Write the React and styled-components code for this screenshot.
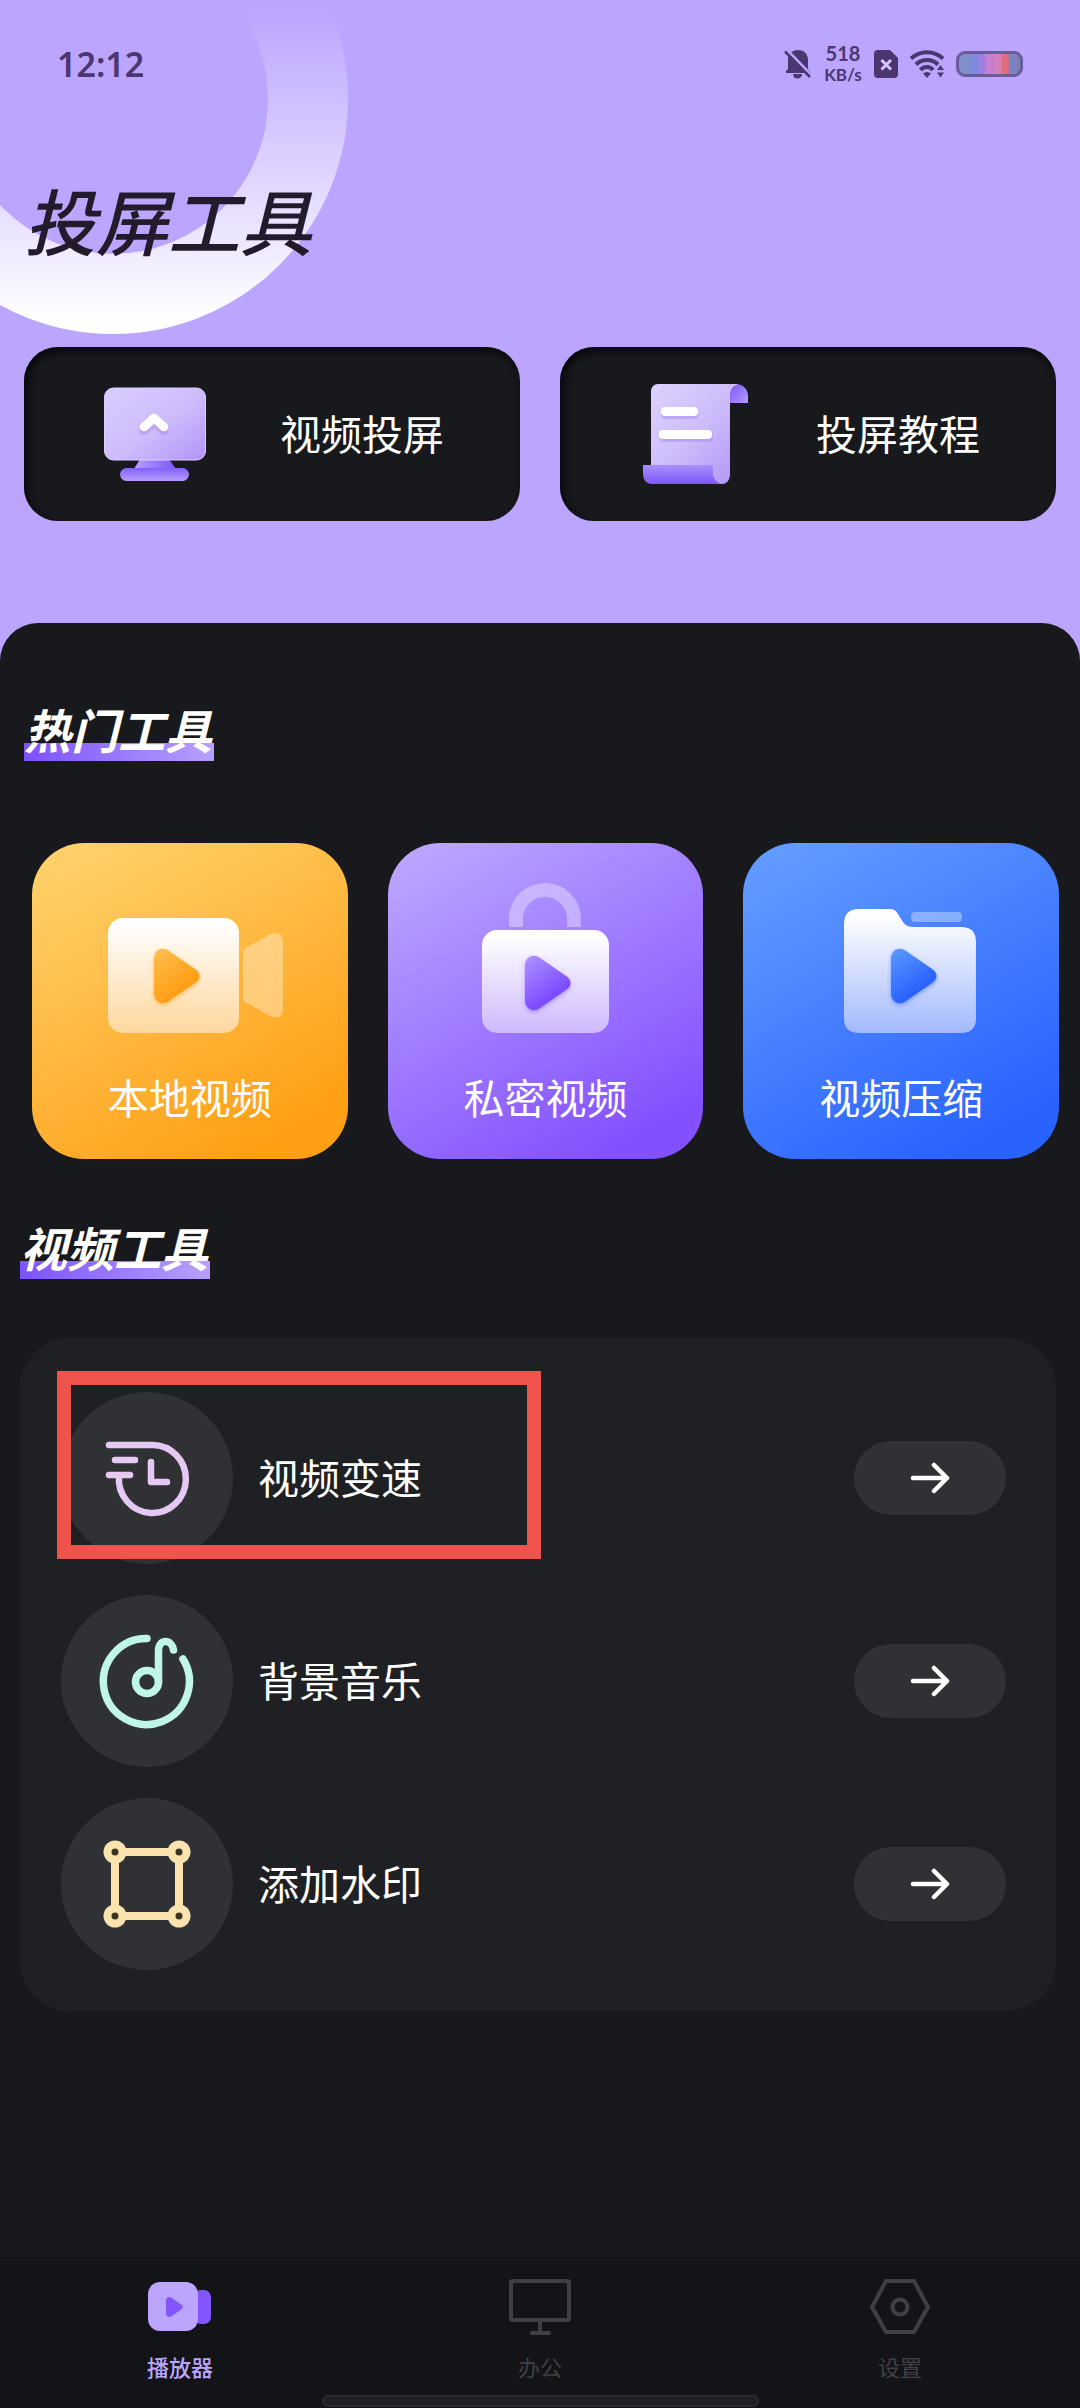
import React, { useState } from "react";
import styled, { createGlobalStyle } from "styled-components";

const GlobalStyle = createGlobalStyle`
* { box-sizing: border-box; }
body {
    margin: 0;
    background: #18191c;
    font-family: "Noto Sans", "Noto Sans CJK SC", sans-serif;
}
h1, h2, ul { margin: 0; padding: 0; }
button { font-family: inherit; border: none; cursor: pointer; }
svg { display: block; flex-shrink: 0; }
`
const Page = styled.div`
display: flex;
flex-direction: column;
min-height: 100vh;
background: #bca5ff;
`
const Header = styled.header`
position: relative;
padding: 0 24px 102px;
overflow: hidden;
`
/* 左上角装饰圆环 */
const Ring = styled.svg`
position: absolute;
top: 0;
left: 0;
`
const StatusBar = styled.div`
position: relative;
display: flex;
align-items: center;
justify-content: space-between;
height: 128px;
padding: 0 33px;
color: #4b3670;
`
const Time = styled.span`
font-size: 34px;
line-height: 40px;
font-weight: 600;
`
const StatusIcons = styled.div`
display: flex;
align-items: center;
gap: 12px;
`
const Speed = styled.div`
display: flex;
flex-direction: column;
align-items: center;
width: 38px;
font-family: Lato, sans-serif;
font-weight: 700;
white-space: nowrap;
`
const SpeedText = styled.span`
font-size: ${(props) => (props.$small ? "17px" : "20px")};
line-height: 22px;
`
const Battery = styled.div`
width: 67px;
height: 26px;
border: 3px solid #6a5c98;
border-radius: 9px;
background: linear-gradient(90deg, #7f8fca 0 18%, #7b8be0 22% 28%, #9880e0 32% 40%, #c77fd0 46% 56%, #d87fb8 60% 68%, #e0697c 72% 80%, #7c80bc 84%);
`
const Title = styled.h1`
position: relative;
margin-top: 50px;
font-size: 72px;
line-height: 88px;
font-weight: 500;
font-style: italic;
color: #231b2b;
`
const CastGrid = styled.div`
position: relative;
display: grid;
grid-template-columns: 1fr 1fr;
gap: 40px;
margin-top: 81px;
`
const CastCard = styled.button`
display: flex;
align-items: center;
gap: 66px;
height: 174px;
padding: 0 0 0 78px;
border-radius: 34px;
background: #18191c;
box-shadow: inset 3px 4px 9px #07060c;
color: #fff;
font-size: 41px;
line-height: 50px;
white-space: nowrap;
`
const Sheet = styled.main`
flex: 1;
padding: 78px 24px 60px 20px;
border-radius: 38px 38px 0 0;
background: #18191c;
`
const SectionTitle = styled.h2`
width: fit-content;
margin-left: ${(props) => (props.$indent ? "4px" : "0")};
padding-right: 2px;
font-size: 47px;
line-height: 60px;
font-weight: 700;
font-style: italic;
color: #fff;
background: linear-gradient(90deg, #7c52ff, #b8a0ff) no-repeat bottom / 100% 18px;
`
const HotGrid = styled.div`
display: grid;
grid-template-columns: repeat(3, 1fr);
gap: 40px;
margin: 82px -3px 60px 12px;
`
const HotTile = styled.button`
display: flex;
flex-direction: column;
align-items: center;
gap: 30px;
height: 316px;
padding: 30px 0 0;
border-radius: 52px;
background: linear-gradient(150deg, ${(props) => props.$from}, ${(props) => props.$to} 88%);
color: #fff;
font-size: 41px;
line-height: 50px;
`
const ToolList = styled.ul`
display: flex;
flex-direction: column;
gap: 31px;
margin-top: 59px;
padding: 54px 50px 41px 41px;
border-radius: 50px;
background: #1f2023;
list-style: none;
`
const ToolRow = styled.li`
position: relative;
display: flex;
align-items: center;
gap: 25px;
color: #fff;
font-size: 41px;
line-height: 50px;
`
const ToolIcon = styled.span`
width: 172px;
height: 172px;
border-radius: 50%;
background: #303134;
`
const ArrowButton = styled.button`
display: flex;
align-items: center;
justify-content: center;
width: 152px;
height: 74px;
margin-left: auto;
padding: 0;
border-radius: 37px;
background: #303134;
`
/* 红色标注框，盖在第一行上面 */
const Marker = styled.div`
position: absolute;
top: -21px;
left: -4px;
width: 484px;
height: 188px;
border: 14px solid #f0524c;
pointer-events: none;
`
const NavBar = styled.nav`
padding: 21px 0 1px;
background: #131418;
`
const NavItems = styled.div`
display: grid;
grid-template-columns: repeat(3, 1fr);
`
const NavItem = styled.button`
display: flex;
flex-direction: column;
align-items: center;
gap: 16px;
padding: 0;
background: transparent;
color: ${(props) => (props.$active ? "#bca5ff" : "#3f4045")};
font-size: 22px;
line-height: 30px;
font-weight: ${(props) => (props.$active ? 500 : 400)};
`
const HomeIndicator = styled.div`
width: 437px;
height: 12px;
margin: 13px auto 0;
border: 2px solid #2a2b2f;
border-radius: 6px;
background: #1e1f23;
`

const PLAY = "M0 10C0 1 8 -3 15 2L41 20C47 24 47 30 41 34L15 52C8 57 0 53 0 44Z";

const MonitorIcon = () => (
    <svg width="112" height="106" viewBox="0 0 112 106">
        <defs>
            <linearGradient id="screen" x1="0" y1="0" x2="1" y2="1">
                <stop offset="0" stopColor="#dacdff" />
                <stop offset="0.55" stopColor="#cdbbfb" />
                <stop offset="1" stopColor="#b392fb" />
            </linearGradient>
            <linearGradient id="base" x1="0" y1="0" x2="0" y2="1">
                <stop offset="0" stopColor="#8360fa" />
                <stop offset="1" stopColor="#b79cff" />
            </linearGradient>
            <linearGradient id="neck" x1="0" y1="0" x2="1" y2="0">
                <stop offset="0" stopColor="#b99fff" />
                <stop offset="1" stopColor="#7c55f8" />
            </linearGradient>
        </defs>
        <path d="M38 78H67L74 88H32Z" fill="url(#neck)" />
        <rect x="18" y="87" width="69" height="13" rx="6.5" fill="url(#base)" />
        <rect x="2.5" y="7" width="101" height="72" rx="9" fill="url(#screen)" stroke="#dccfff" />
        <path d="M42 50L52 41L62 50" fill="none" stroke="#a98cf0" strokeOpacity="0.5" strokeWidth="9" strokeLinecap="round" strokeLinejoin="round" />
        <path d="M42 46L52 37L62 46" fill="none" stroke="#fff" strokeWidth="8.5" strokeLinecap="round" strokeLinejoin="round" />
    </svg>
)

const ScrollIcon = () => (
    <svg width="112" height="106" viewBox="0 0 112 106">
        <defs>
            <linearGradient id="paper" x1="0" y1="0" x2="1" y2="1">
                <stop offset="0" stopColor="#ddd2ff" />
                <stop offset="0.5" stopColor="#cdbcfa" />
                <stop offset="1" stopColor="#b094f8" />
            </linearGradient>
            <linearGradient id="roll" x1="0" y1="0" x2="0" y2="1">
                <stop offset="0" stopColor="#ab8ffd" />
                <stop offset="1" stopColor="#7d57fa" />
            </linearGradient>
            <linearGradient id="curl" x1="0" y1="0" x2="1" y2="1">
                <stop offset="0" stopColor="#7d57fa" />
                <stop offset="1" stopColor="#b59cff" />
            </linearGradient>
        </defs>
        <path d="M92 3H98C105 3 110 8 110 15V22H92Z" fill="url(#curl)" />
        <path d="M20 3H101C95 4 92 9 92 14V93C92 99 89 103 84 103H22L13 86V11C13 6 16 3 20 3Z" fill="url(#paper)" />
        <path d="M5 84H75V92C75 98 79 102 84 103H14C8 103 5 98 5 93Z" fill="url(#roll)" />
        <rect x="23" y="29" width="37" height="9" rx="4" fill="#9f80ee" fillOpacity="0.4" />
        <rect x="22" y="52" width="53" height="9" rx="4" fill="#9f80ee" fillOpacity="0.4" />
        <rect x="23" y="26" width="37" height="9" rx="4" fill="#fff" />
        <rect x="21" y="49" width="53" height="9" rx="4" fill="#fff" />
    </svg>
)

const HotDefs = ({ id, fade, from, to }) => (
    <defs>
        <linearGradient id={id + "Body"} x1="0" y1="0" x2="0" y2="1">
            <stop offset="0.05" stopColor="#fff" />
            <stop offset="1" stopColor={fade} />
        </linearGradient>
        <linearGradient id={id + "Play"} x1="0" y1="0" x2="0.6" y2="1">
            <stop offset="0" stopColor={from} />
            <stop offset="0.8" stopColor={to} />
        </linearGradient>
        <filter id={id + "Glow"} x="-30%" y="-30%" width="160%" height="160%">
            <feDropShadow dx="0" dy="2" stdDeviation="2" floodColor={to} floodOpacity="0.5" />
        </filter>
    </defs>
)

const CameraIcon = () => (
    <svg width="200" height="170" viewBox="58 30 200 170">
        <HotDefs id="cam" fade="#ffd79d" from="#ffc052" to="#ff9f18" />
        <path d="M211 109Q211 107 213 105.5L238 91.5Q251 87 251 99V166Q251 178 238 173L213 159Q211 158 211 155Z" fill="#fff" fillOpacity="0.35" />
        <rect x="76" y="75" width="131" height="115" rx="15" fill="url(#camBody)" />
        <path d={PLAY} transform="translate(122 106)" fill="url(#camPlay)" filter="url(#camGlow)" />
    </svg>
)

const LockIcon = () => (
    <svg width="200" height="170" viewBox="58 30 200 170">
        <HotDefs id="lock" fade="#cfb9ff" from="#b193ff" to="#7c4dff" />
        <path d="M129 84V76A29 29 0 0 1 187 76V84" fill="none" stroke="#fff" strokeOpacity="0.35" strokeWidth="14" />
        <rect x="95" y="87" width="127" height="103" rx="15" fill="url(#lockBody)" />
        <path d={PLAY} transform="translate(138 113)" fill="url(#lockPlay)" filter="url(#lockGlow)" />
    </svg>
)

const FolderIcon = () => (
    <svg width="200" height="170" viewBox="58 30 200 170">
        <HotDefs id="folder" fade="#a3b9ff" from="#5c9bff" to="#2b63ff" />
        <rect x="168" y="69" width="51" height="10" rx="4" fill="#fff" fillOpacity="0.35" />
        <path d="M116 66H147C153 66 155 71 158 76C161 81 164 84 170 84H218Q233 84 233 99V175Q233 190 218 190H116Q101 190 101 175V81Q101 66 116 66Z" fill="url(#folderBody)" />
        <path d={PLAY} transform="translate(148 106)" fill="url(#folderPlay)" filter="url(#folderGlow)" />
    </svg>
)

const SpeedIcon = () => (
    <svg width="172" height="172" viewBox="0 0 172 172" fill="none" stroke="#e6c9f2" strokeWidth="6.5" strokeLinecap="round" strokeLinejoin="round">
        <path d="M48 53H91A33.500 34 0 1 1 58 84" />
        <path d="M54 68H74M48 83H69M90 70V90H106" />
    </svg>
)

const MusicIcon = () => (
    <svg width="172" height="172" viewBox="0 0 172 172" fill="none" stroke="#bff6e8" strokeWidth="7.5" strokeLinecap="round">
        <path d="M86 43.5A43 43 0 1 0 122 64" />
        <circle cx="86" cy="87" r="11.5" />
        <path d="M97.5 87V56C97.5 43 111 44 112.5 55" />
    </svg>
)

const WatermarkIcon = () => (
    <svg width="172" height="172" viewBox="0 0 172 172" fill="none" stroke="#fbe3b0" strokeWidth="8">
        <rect x="54" y="54" width="64" height="64" />
        {[[54, 54], [118, 54], [54, 118], [118, 118]].map(([x, y]) => (
            <circle key={x + "-" + y} cx={x} cy={y} r="7.5" fill="#3a3320" />
        ))}
    </svg>
)

const ArrowIcon = () => (
    <svg width="40" height="32" viewBox="0 0 40 32" fill="none" stroke="#fff" strokeWidth="4.5" strokeLinecap="round" strokeLinejoin="round">
        <path d="M3 16H37M24 3L37 16L24 29" />
    </svg>
)

const PlayerNavIcon = () => (
    <svg width="64" height="58" viewBox="0 0 64 58">
        <rect x="46" y="12" width="17" height="34" rx="7" fill="#8255ff" />
        <rect x="0" y="4" width="50" height="49" rx="12" fill="#bca5ff" />
        <path d={PLAY} transform="translate(18 19) scale(0.37)" fill="#8255ff" />
    </svg>
)

const OfficeNavIcon = () => (
    <svg width="64" height="58" viewBox="0 0 64 58" fill="none" stroke="#3f4045" strokeWidth="4" strokeLinecap="round">
        <rect x="3" y="3" width="58" height="39" rx="2" />
        <path d="M32 42V55M24 55H41" />
    </svg>
)

const SettingNavIcon = () => (
    <svg width="64" height="58" viewBox="0 0 64 58" fill="none" stroke="#3f4045" strokeWidth="4" strokeLinejoin="round">
        <path d="M18 3H46L60 29L46 54H18L4 29Z" />
        <circle cx="32" cy="29" r="7.5" />
    </svg>
)

const StatusGlyphs = () => (
    <>
        <svg width="28" height="30" viewBox="0 0 28 30" fill="#4b3670">
            <path d="M14 1C20 1 24 5 24 11V20L27 24H2V22L4 20V11C4 5 8 1 14 1Z" />
            <path d="M9 25H18C18 28 16 29.5 13.5 29.5S9 28 9 25Z" />
            <path d="M3 1L28 27" stroke="#bca5ff" strokeWidth="3" />
            <path d="M1 2.5L26 28" stroke="#4b3670" strokeWidth="2.5" />
        </svg>
        <Speed>
            <SpeedText>518</SpeedText>
            <SpeedText $small>KB/s</SpeedText>
        </Speed>
        <svg width="24" height="28" viewBox="0 0 24 28">
            <path d="M4 0H16L24 8V24Q24 28 20 28H4Q0 28 0 24V4Q0 0 4 0Z" fill="#4b3670" />
            <path d="M7.5 10L17 19.5M17 10L7.5 19.5" stroke="#d5c8ff" strokeWidth="3" />
        </svg>
        <svg width="34" height="28" viewBox="0 0 34 28" fill="none" stroke="#4b3670" strokeWidth="4">
            <path d="M1 8.5C10 0 24 0 33 8.5" />
            <path d="M6 14.5C12 8.5 22 8.5 28 14.5" />
            <path d="M10.5 20C14 16 20 16 23 20" />
            <path d="M13 23.5Q17 20.5 21 23.5L17 28Z" fill="#4b3670" stroke="none" />
            <path d="M27 20L30.5 15L34 20ZM27 22.5H34L30.5 27.5Z" fill="#4b3670" stroke="none" />
        </svg>
        <Battery />
    </>
)

const castItems = [
    { name: "视频投屏", Icon: MonitorIcon },
    { name: "投屏教程", Icon: ScrollIcon },
]
const hotItems = [
    { name: "本地视频", Icon: CameraIcon, from: "#ffd470", to: "#ff9f14" },
    { name: "私密视频", Icon: LockIcon, from: "#bfaaff", to: "#8350ff" },
    { name: "视频压缩", Icon: FolderIcon, from: "#659fff", to: "#2962ff" },
]
const toolItems = [
    { name: "视频变速", Icon: SpeedIcon, marked: true },
    { name: "背景音乐", Icon: MusicIcon },
    { name: "添加水印", Icon: WatermarkIcon },
]
const navItems = [
    { name: "播放器", Icon: PlayerNavIcon },
    { name: "办公", Icon: OfficeNavIcon },
    { name: "设置", Icon: SettingNavIcon },
]

export default function App() {
    const [tab, setTab] = useState("播放器");

    return (
        <Page>
            <GlobalStyle />
            <Header>
                <Ring width="360" height="340" viewBox="0 0 360 340">
                    <defs>
                        <linearGradient id="ring" gradientUnits="userSpaceOnUse" x1="0" y1="10" x2="0" y2="320">
                            <stop offset="0" stopColor="#fff" stopOpacity="0" />
                            <stop offset="1" stopColor="#fff" />
                        </linearGradient>
                    </defs>
                    <circle cx="113" cy="99" r="195" fill="none" stroke="url(#ring)" strokeWidth="80" />
                </Ring>
                <StatusBar>
                    <Time>12:12</Time>
                    <StatusIcons><StatusGlyphs /></StatusIcons>
                </StatusBar>
                <Title>投屏工具</Title>
                <CastGrid>
                    {castItems.map(({ name, Icon }) => (
                        <CastCard key={name}><Icon />{name}</CastCard>
                    ))}
                </CastGrid>
            </Header>
            <Sheet>
                <SectionTitle $indent>热门工具</SectionTitle>
                <HotGrid>
                    {hotItems.map(({ name, Icon, from, to }) => (
                        <HotTile key={name} $from={from} $to={to}><Icon />{name}</HotTile>
                    ))}
                </HotGrid>
                <SectionTitle>视频工具</SectionTitle>
                <ToolList>
                    {toolItems.map(({ name, Icon, marked }) => (
                        <ToolRow key={name}>
                            <ToolIcon><Icon /></ToolIcon>
                            {name}
                            <ArrowButton aria-label={name}><ArrowIcon /></ArrowButton>
                            {marked && <Marker />}
                        </ToolRow>
                    ))}
                </ToolList>
            </Sheet>
            <NavBar>
                <NavItems>
                    {navItems.map(({ name, Icon }) => (
                        <NavItem key={name} $active={tab === name} onClick={() => setTab(name)}>
                            <Icon />{name}
                        </NavItem>
                    ))}
                </NavItems>
                <HomeIndicator />
            </NavBar>
        </Page>
    )
}
